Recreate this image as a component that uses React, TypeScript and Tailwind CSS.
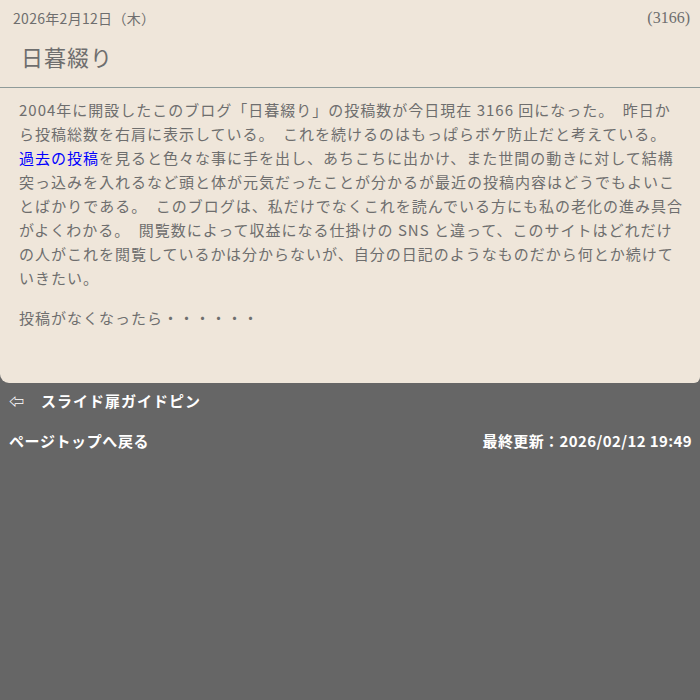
import React from "react";

const lines: React.ReactNode[] = [
  "2004年に開設したこのブログ「日暮綴り」の投稿数が今日現在 3166 回になった。　昨日か",
  "ら投稿総数を右肩に表示している。　これを続けるのはもっぱらボケ防止だと考えている。",
  <>
    <span className="text-[#0000ff]">過去の投稿</span>を見ると色々な事に手を出し、あちこちに出かけ、また世間の動きに対して結構
  </>,
  "突っ込みを入れるなど頭と体が元気だったことが分かるが最近の投稿内容はどうでもよいこ",
  "とばかりである。　このブログは、私だけでなくこれを読んでいる方にも私の老化の進み具合",
  "がよくわかる。　閲覧数によって収益になる仕掛けの SNS と違って、このサイトはどれだけ",
  "の人がこれを閲覧しているかは分からないが、自分の日記のようなものだから何とか続けて",
  "いきたい。",
];

export default function App() {
  return (
    <div className="w-[700px] h-[700px] bg-[#666666]" style={{ fontFamily: '"Noto Sans CJK JP", "Noto Sans", sans-serif' }}>
      <div className="bg-[#efe6da] rounded-bl-[9px] rounded-br-[6px] text-[#6e6e6e]">
        <div className="flex justify-between items-center pl-[13px] pr-[10px] pt-[7px] h-[28px]">
          <span className="text-[14px] leading-[20px] tracking-[0.3px]">2026年2月12日（木）</span>
          <span className="text-[16px] leading-[20px]" style={{ fontFamily: '"Liberation Serif", serif' }}>(3166)</span>
        </div>
        <div className="pl-[21px] pt-[12px] h-[59px] text-[22px] leading-[32px] tracking-[1px]">日暮綴り</div>
        <div className="border-t border-[#8f9b99]" />
        <div className="px-[19px] pt-[10px] pb-[53px] text-[15px] leading-[24px] tracking-[1px]">
          <p>
            {lines.map((l, i) => (
              <span key={i} className="block whitespace-nowrap">{l}</span>
            ))}
          </p>
          <p className="mt-[16px]">投稿がなくなったら・・・・・・</p>
        </div>
      </div>
      <div className="text-white font-bold text-[15px] leading-[20px]">
        <div className="flex items-center pl-[9px] h-[36px]">
          <span className="w-[32px]">⇦</span>
          <span className="tracking-[1px]">スライド扉ガイドピン</span>
        </div>
        <div className="flex justify-between items-center pl-[9px] pr-[8px] pt-[12px]">
          <span className="tracking-[0.6px]">ページトップへ戻る</span>
          <span className="tracking-[0.4px]">最終更新：2026/02/12 19:49</span>
        </div>
      </div>
    </div>
  );
}
